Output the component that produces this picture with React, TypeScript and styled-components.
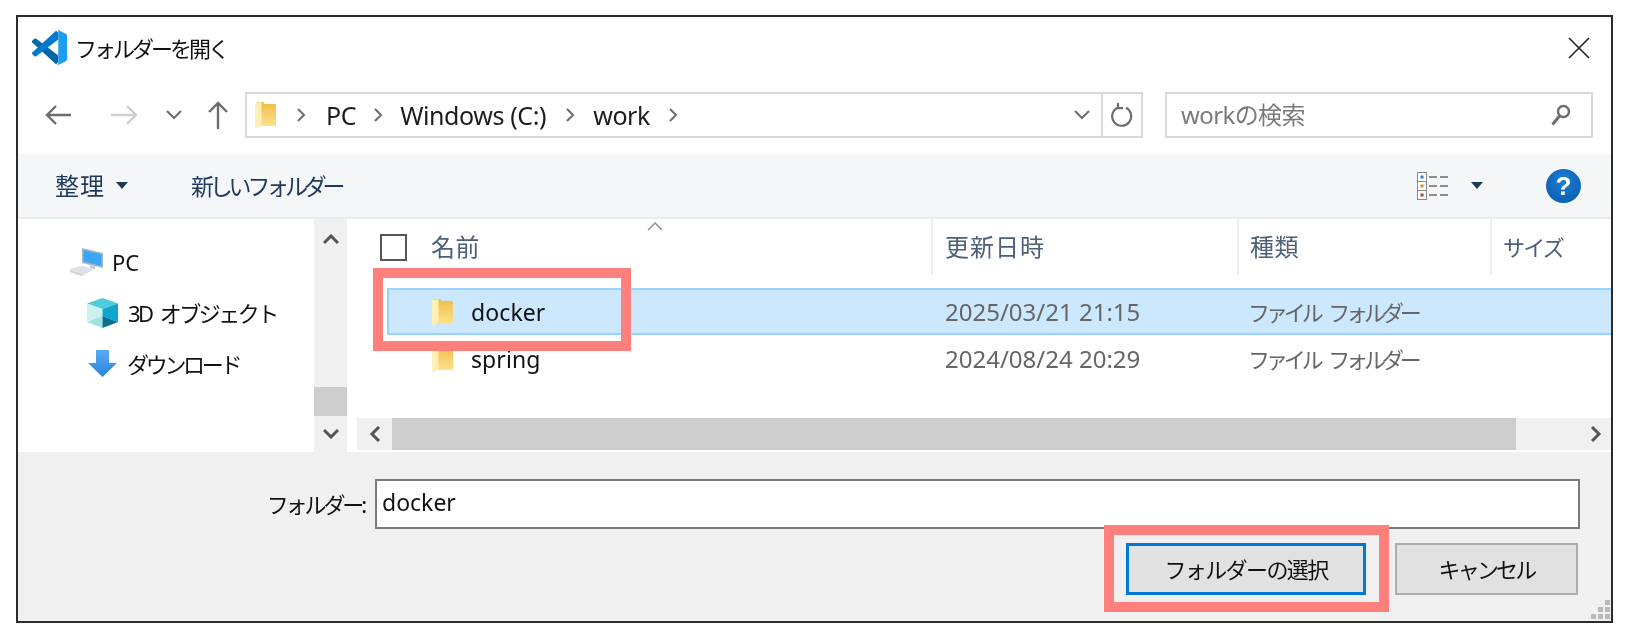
import React from "react";
import styled, { createGlobalStyle } from "styled-components";

const Global = createGlobalStyle`
  html, body { margin: 0; padding: 0; background: #fff; }
  body { font-family: "Noto Sans", "Open Sans", "Noto Sans CJK JP", sans-serif; }
`;

const Page = styled.div`
  width: 1628px;
  height: 634px;
  padding: 15px 0 0 16px;
  box-sizing: border-box;
  background: #fff;
`;

const Dialog = styled.div`
  position: relative;
  width: 1597px;
  height: 608px;
  box-sizing: border-box;
  border: 2px solid #2b2b2b;
  background: #fff;
  display: flex;
  flex-direction: column;
  overflow: hidden;
  filter: blur(0.45px);
`;

const Jp = `"Noto Sans", "Noto Sans CJK JP", sans-serif`;

const TitleBar = styled.div`
  height: 65px;
  flex: none;
  display: flex;
  align-items: center;
  padding: 0 21px 4px 14px;
  box-sizing: border-box;
`;

const TitleText = styled.div`
  margin-left: 8px;
  font: 22px/30px ${Jp};
  letter-spacing: -3px;
  color: #111;
  flex: 1;
`;

const NavBar = styled.div`
  height: 72px;
  flex: none;
  display: flex;
  padding: 10px 18px 0 26px;
  box-sizing: border-box;
`;

const NavButtons = styled.div`
  width: 201px;
  height: 46px;
  display: flex;
  align-items: center;
  flex: none;
`;

const NavSlot = styled.span<{ $ml: number }>`
  display: inline-flex;
  margin-left: ${(p) => p.$ml}px;
  flex: none;
`;

const AddressBox = styled.div`
  width: 898px;
  height: 46px;
  box-sizing: border-box;
  border: 2px solid #d9d9d9;
  display: flex;
  align-items: center;
  padding-left: 8px;
  flex: none;
`;

const Crumb = styled.span`
  font: 25px/30px ${Jp};
  letter-spacing: -0.4px;
  color: #1c1c1c;
  white-space: nowrap;
`;

const Fill = styled.div`
  flex: 1;
`;

const AddressEnd = styled.div`
  width: 40px;
  height: 100%;
  box-sizing: border-box;
  border-left: 2px solid #d9d9d9;
  margin-left: 11px;
  display: flex;
  align-items: center;
  justify-content: center;
  flex: none;
`;

const SearchBox = styled.div`
  margin-left: 22px;
  flex: 1;
  height: 46px;
  box-sizing: border-box;
  border: 2px solid #d9d9d9;
  display: flex;
  align-items: center;
  padding: 0 20px 0 14px;
`;

const SearchText = styled.span`
  flex: 1;
  font: 24px/30px ${Jp};
  letter-spacing: -0.6px;
  color: #7a7a7a;
`;

const Toolbar = styled.div`
  height: 65px;
  flex: none;
  box-sizing: border-box;
  background: #f5f6f7;
  border-bottom: 2px solid #ececec;
  display: flex;
  align-items: center;
  padding: 0 30px 0 37px;
`;

const ToolText = styled.span<{ $ls: number; $size: number; $ml?: number }>`
  font: ${(p) => p.$size}px/30px ${Jp};
  letter-spacing: ${(p) => p.$ls}px;
  margin-left: ${(p) => p.$ml ?? 0}px;
  color: #1e395b;
  white-space: nowrap;
`;

const Caret = styled.span<{ $gap: number }>`
  width: 0;
  height: 0;
  border-left: 6.5px solid transparent;
  border-right: 6.5px solid transparent;
  border-top: 7px solid #1e395b;
  margin-left: ${(p) => p.$gap}px;
  flex: none;
`;

const HelpBadge = styled.div`
  width: 35px;
  height: 34px;
  border-radius: 50%;
  background: radial-gradient(circle at 50% 35%, #1a7ed4, #0a57ab);
  color: #fff;
  font: bold 26px/34px "Liberation Sans", sans-serif;
  text-align: center;
  margin-left: 63px;
  flex: none;
`;

const Content = styled.div`
  height: 233px;
  flex: none;
  display: flex;
  background: #fff;
`;

const NavPane = styled.div`
  width: 296px;
  flex: none;
  padding-top: 17px;
  box-sizing: border-box;
`;

const NavItem = styled.div<{ $indent: number; $gap: number }>`
  height: 51px;
  display: flex;
  align-items: center;
  padding-left: ${(p) => p.$indent}px;
  gap: ${(p) => p.$gap}px;
`;

const NavLabel = styled.span<{ $ls: number; $ws?: number }>`
  font: 22px/30px ${Jp};
  letter-spacing: ${(p) => p.$ls}px;
  word-spacing: ${(p) => p.$ws ?? 0}px;
  color: #111;
  white-space: nowrap;
`;

const VScroll = styled.div`
  width: 33px;
  flex: none;
  background: #f0f0f0;
  display: flex;
  flex-direction: column;
`;

const VScrollButton = styled.div<{ $h: number }>`
  height: ${(p) => p.$h}px;
  display: flex;
  align-items: center;
  justify-content: center;
  flex: none;
`;

const VThumb = styled.div`
  height: 29px;
  background: #cdcdcd;
  flex: none;
`;

const Main = styled.div`
  flex: 1;
  margin-left: 10px;
  display: flex;
  flex-direction: column;
  min-width: 0;
  position: relative;
`;

const HeaderRow = styled.div`
  height: 56px;
  flex: none;
  display: grid;
  grid-template-columns: 574px 306px 253px 1fr;
  margin-bottom: 13px;
`;

const HeaderCell = styled.div<{ $ls: number; $pad: number; $divider?: boolean }>`
  display: flex;
  align-items: center;
  height: 100%;
  box-sizing: border-box;
  padding-left: ${(p) => p.$pad}px;
  border-left: ${(p) => (p.$divider ? "2px solid #eceef1" : "none")};
  font: 24px/30px ${Jp};
  color: #4d6078;
  letter-spacing: ${(p) => p.$ls}px;
`;

const KanaHeader = styled(HeaderCell)`
  font-size: 22px;
`;

const CheckBox = styled.span`
  width: 27px;
  height: 27px;
  box-sizing: border-box;
  border: 2px solid #555;
  margin-right: 24px;
  flex: none;
`;

const SortCaret = styled.svg`
  position: absolute;
  left: 290px;
  top: 3px;
`;

const FileRow = styled.div<{ $selected?: boolean }>`
  height: 47px;
  flex: none;
  box-sizing: border-box;
  margin-left: 30px;
  display: grid;
  grid-template-columns: 545px 305px 1fr;
  align-items: center;
  background: ${(p) => (p.$selected ? "#cce8ff" : "transparent")};
  border: 2px solid ${(p) => (p.$selected ? "#99d1ff" : "transparent")};
  border-right: none;
`;

const NameCell = styled.div`
  display: flex;
  align-items: center;
  gap: 18px;
  padding-left: 43px;
  font: 23px/30px ${Jp};
  letter-spacing: 0.1px;
  color: #111;
`;

const MetaCell = styled.div<{ $narrow?: boolean }>`
  padding-left: ${(p) => (p.$narrow ? 9 : 11)}px;
  font: ${(p) => (p.$narrow ? 22 : 24)}px/30px ${Jp};
  letter-spacing: ${(p) => (p.$narrow ? "-4.1px" : "0")};
  word-spacing: ${(p) => (p.$narrow ? "7px" : "0")};
  color: #666;
  white-space: nowrap;
`;

const HScroll = styled.div`
  margin-top: auto;
  margin-bottom: 2px;
  height: 32px;
  flex: none;
  display: flex;
  background: #f0f0f0;
`;

const HScrollButton = styled.div<{ $w: number; $end?: boolean }>`
  width: ${(p) => p.$w}px;
  flex: none;
  display: flex;
  align-items: center;
  justify-content: ${(p) => (p.$end ? "flex-end" : "center")};
  padding-right: ${(p) => (p.$end ? 9 : 0)}px;
  box-sizing: border-box;
`;

const HThumb = styled.div`
  flex: 1;
  background: #cdcdcd;
`;

const Footer = styled.div`
  flex: 1;
  position: relative;
  background: #f0f0f0;
  padding: 27px 31px 0 0;
  box-sizing: border-box;
  display: flex;
  flex-direction: column;
`;

const FieldRow = styled.div`
  display: flex;
  justify-content: flex-end;
  align-items: center;
  gap: 11px;
`;

const FieldLabel = styled.span`
  font: 22px/30px ${Jp};
  letter-spacing: -3.1px;
  color: #111;
  white-space: nowrap;
`;

const Field = styled.div`
  width: 1205px;
  height: 50px;
  box-sizing: border-box;
  border: 2px solid #7a7a7a;
  background: #fff;
  padding: 0 5px 5px;
  display: flex;
  align-items: center;
  font: 23px/30px ${Jp};
  color: #111;
`;

const ButtonRow = styled.div`
  margin-top: 14px;
  padding-right: 2px;
  display: flex;
  justify-content: flex-end;
  gap: 29px;
`;

const DialogButton = styled.div<{ $primary?: boolean; $w: number; $ls: number }>`
  width: ${(p) => p.$w}px;
  height: 52px;
  box-sizing: border-box;
  background: #e1e1e1;
  border: ${(p) => (p.$primary ? "3px solid #0078d7" : "2px solid #adadad")};
  display: flex;
  align-items: center;
  justify-content: center;
  font: 22px/30px ${Jp};
  letter-spacing: ${(p) => p.$ls}px;
  color: #111;
`;

const Grip = styled.div`
  position: absolute;
  right: 1px;
  bottom: 2px;
  display: flex;
`;

const Callout = styled.div<{ $l: number; $t: number; $w: number; $h: number }>`
  position: absolute;
  left: ${(p) => p.$l}px;
  top: ${(p) => p.$t}px;
  width: ${(p) => p.$w}px;
  height: ${(p) => p.$h}px;
  box-sizing: border-box;
  border: 10px solid #ff7f7c;
`;

const Spaced = styled.span<{ $w: number }>`
  display: inline-flex;
  justify-content: center;
  width: ${(p) => p.$w}px;
  flex: none;
`;

const VSCodeLogo = () => (
  <svg width="35" height="35" viewBox="0 0 24 24">
    <path fill="#0065a9" d="M.327 7.261 1.65 6.06a1 1 0 0 1 1.276-.057L18 17.45v4.5l-1.5 1.55L.326 8.74a1 1 0 0 1 0-1.479z" />
    <path fill="#007acc" d="M.326 15.26 16.5.5 18 1.9v4.65L2.926 17.997a1 1 0 0 1-1.276-.057L.327 16.739a1 1 0 0 1 0-1.479z" />
    <path fill="#1f9cf0" d="M16.505.5a1.494 1.494 0 0 1 1.705-.29l4.94 2.377A1.5 1.5 0 0 1 24 3.939V20.06a1.5 1.5 0 0 1-.85 1.352l-4.942 2.377a1.492 1.492 0 0 1-1.704-.29c.6.6 1.5.2 1.5-.6V1.1c0-.8-.9-1.2-1.5-.6z" />
  </svg>
);

const Folder = () => (
  <svg width="21" height="28" viewBox="0 0 21 28">
    <defs>
      <linearGradient id="fg" x1="0" y1="0" x2="0" y2="1">
        <stop offset="0" stopColor="#f0bd45" />
        <stop offset="1" stopColor="#fde08c" />
      </linearGradient>
    </defs>
    <path fill="url(#fg)" d="M2 1h6l2 2h11v22H2z" />
    <path fill="#fff0b8" d="M0 2.5 6.5 1v23L1.5 27.5 0 26.5z" />
  </svg>
);

const ArrowLeft = ({ c }: { c: string }) => (
  <svg width="28" height="22" viewBox="0 0 28 22" fill="none" stroke={c} strokeWidth="2.4">
    <path d="M27 11H3M12 2l-9 9 9 9" />
  </svg>
);

const ArrowRight = ({ c }: { c: string }) => (
  <svg width="28" height="22" viewBox="0 0 28 22" fill="none" stroke={c} strokeWidth="2.4">
    <path d="M1 11h25M17 2l9 9-9 9" />
  </svg>
);

const ArrowUp = () => (
  <svg width="20" height="28" viewBox="0 0 20 28" fill="none" stroke="#6d6d6d" strokeWidth="2.4">
    <path d="M10 28V2M1 11l9-9 9 9" />
  </svg>
);

const ChevDown = ({ c = "#6d6d6d", sw = 2 }: { c?: string; sw?: number }) => (
  <svg width="16" height="10" viewBox="0 0 16 10" fill="none" stroke={c} strokeWidth={sw}>
    <path d="M1 1l7 7 7-7" />
  </svg>
);

const ChevUpSmall = ({ c = "#555", sw = 3 }: { c?: string; sw?: number }) => (
  <svg width="16" height="10" viewBox="0 0 16 10" fill="none" stroke={c} strokeWidth={sw}>
    <path d="M1 9l7-7 7 7" />
  </svg>
);

const ChevRight = ({ c = "#6d6d6d", sw = 2 }: { c?: string; sw?: number }) => (
  <svg width="10" height="14" viewBox="0 0 10 14" fill="none" stroke={c} strokeWidth={sw}>
    <path d="M2 1l6 6-6 6" />
  </svg>
);

const ChevLeftBold = () => (
  <svg width="12" height="16" viewBox="0 0 12 16" fill="none" stroke="#555" strokeWidth="3">
    <path d="M10 1L3 8l7 7" />
  </svg>
);

const ChevRightBold = () => (
  <svg width="12" height="16" viewBox="0 0 12 16" fill="none" stroke="#555" strokeWidth="3">
    <path d="M2 1l7 7-7 7" />
  </svg>
);

const Refresh = () => (
  <svg width="22" height="26" viewBox="0 0 22 26" fill="none" stroke="#6d6d6d" strokeWidth="2.2">
    <path d="M7 5.5a9.5 9.5 0 1 0 8 .3M7 1v5.2h5" />
  </svg>
);

const Magnifier = () => (
  <svg width="20" height="22" viewBox="0 0 20 22" fill="none" stroke="#6d6d6d">
    <circle cx="12.5" cy="7.5" r="5.5" strokeWidth="2.4" />
    <path d="M8.5 12 1.5 20.5" strokeWidth="3" />
  </svg>
);

const CloseX = () => (
  <svg width="22" height="22" viewBox="0 0 22 22" fill="none" stroke="#222" strokeWidth="1.6">
    <path d="M1 1l20 20M21 1L1 21" />
  </svg>
);

const ViewIcon = () => (
  <svg width="32" height="28" viewBox="0 0 32 28">
    <rect x="0.5" y="0.5" width="9" height="9" fill="#fff" stroke="#8a8a8a" />
    <rect x="0.5" y="9.5" width="9" height="9" fill="#fff" stroke="#8a8a8a" />
    <rect x="0.5" y="18.5" width="9" height="9" fill="#fff" stroke="#8a8a8a" />
    <rect x="3.5" y="3.5" width="3" height="3" fill="#2a7fc0" />
    <rect x="3.5" y="12.5" width="3" height="3" fill="#b89a1c" />
    <rect x="3.5" y="21.5" width="3" height="3" fill="#c0392b" />
    <path d="M12 5h8M23 5h8M12 14h8M23 14h8M12 23h8M23 23h8" stroke="#6a6a6a" strokeWidth="1.6" />
  </svg>
);

const PcIcon = () => (
  <svg width="34" height="28" viewBox="0 0 34 28">
    <path fill="#a9b6c2" d="M13 0l21 5v15l-21-5z" />
    <path fill="#38a8f5" d="M14.5 2l18 4.3v11.6l-18-4.3z" />
    <path fill="#c3ccd4" d="M21 17l5 1.2v3L21 20z" />
    <path fill="#dfe3e7" d="M1 21l12-3.5 12 4L13 28 1 24z" />
    <path fill="#c9ced3" d="M1 24l12 4v-1.5L1 22.5z" />
  </svg>
);

const CubeIcon = () => (
  <svg width="31" height="30" viewBox="0 0 31 30">
    <path fill="#4fcbe0" d="M15.5 0 31 5.5 15.5 11 0 5.5z" />
    <path fill="#cdf1f0" d="M0 5.5 15.5 11v7L0 24z" />
    <path fill="#9fe2e2" d="M0 24l15.5-6v12z" />
    <path fill="#0ea5cf" d="M31 5.5 15.5 11v7L31 24z" />
    <path fill="#0b6f8e" d="M31 24l-15.5-6v12z" />
  </svg>
);

const DownArrow = () => (
  <svg width="29" height="27" viewBox="0 0 29 27">
    <defs>
      <linearGradient id="da" x1="0" y1="0" x2="0" y2="1">
        <stop offset="0" stopColor="#5aa9ee" />
        <stop offset="1" stopColor="#2a84dc" />
      </linearGradient>
    </defs>
    <path fill="url(#da)" d="M8 0h13v13h8L14.5 27 0 13h8z" />
  </svg>
);

const GripDots = () => (
  <svg width="19" height="19" viewBox="0 0 19 19" fill="#b9b9b9">
    <rect x="14" y="0" width="5" height="5" />
    <rect x="7" y="7" width="5" height="5" />
    <rect x="14" y="7" width="5" height="5" />
    <rect x="0" y="14" width="5" height="5" />
    <rect x="7" y="14" width="5" height="5" />
    <rect x="14" y="14" width="5" height="5" />
  </svg>
);

export default function App() {
  return (
    <>
      <Global />
      <Page>
        <Dialog>
          <TitleBar>
            <VSCodeLogo />
            <TitleText>フォルダーを開く</TitleText>
            <CloseX />
          </TitleBar>
          <NavBar>
            <NavButtons>
              <NavSlot $ml={0}>
                <ArrowLeft c="#6d6d6d" />
              </NavSlot>
              <NavSlot $ml={38}>
                <ArrowRight c="#cfcfcf" />
              </NavSlot>
              <NavSlot $ml={28}>
                <ChevDown />
              </NavSlot>
              <NavSlot $ml={26}>
                <ArrowUp />
              </NavSlot>
            </NavButtons>
            <AddressBox>
              <Folder />
              <Spaced $w={50}>
                <ChevRight />
              </Spaced>
              <Crumb>PC</Crumb>
              <Spaced $w={44}>
                <ChevRight />
              </Spaced>
              <Crumb>Windows (C:)</Crumb>
              <Spaced $w={47}>
                <ChevRight />
              </Spaced>
              <Crumb>work</Crumb>
              <Spaced $w={46}>
                <ChevRight />
              </Spaced>
              <Fill />
              <ChevDown />
              <AddressEnd>
                <Refresh />
              </AddressEnd>
            </AddressBox>
            <SearchBox>
              <SearchText>workの検索</SearchText>
              <Magnifier />
            </SearchBox>
          </NavBar>
          <Toolbar>
            <ToolText $size={24} $ls={1}>整理</ToolText>
            <Caret $gap={11} />
            <ToolText $size={23} $ls={-4.2} $ml={63}>新しいフォルダー</ToolText>
            <Fill />
            <ViewIcon />
            <Caret $gap={22} />
            <HelpBadge>?</HelpBadge>
          </Toolbar>
          <Content>
            <NavPane>
              <NavItem $indent={51} $gap={9}>
                <PcIcon />
                <NavLabel $ls={0}>PC</NavLabel>
              </NavItem>
              <NavItem $indent={69} $gap={10}>
                <CubeIcon />
                <NavLabel $ls={-2.5} $ws={5}>3D オブジェクト</NavLabel>
              </NavItem>
              <NavItem $indent={70} $gap={10}>
                <DownArrow />
                <NavLabel $ls={-3.3}>ダウンロード</NavLabel>
              </NavItem>
            </NavPane>
            <VScroll>
              <VScrollButton $h={40}>
                <ChevUpSmall />
              </VScrollButton>
              <Fill />
              <VThumb />
              <VScrollButton $h={36}>
                <ChevDown c="#555" sw={3} />
              </VScrollButton>
            </VScroll>
            <Main>
              <HeaderRow>
                <HeaderCell $ls={0.5} $pad={23}>
                  <CheckBox />
                  名前
                </HeaderCell>
                <HeaderCell $divider $ls={1} $pad={12}>更新日時</HeaderCell>
                <HeaderCell $divider $ls={0.5} $pad={11}>種類</HeaderCell>
                <KanaHeader $divider $ls={-1.8} $pad={11}>サイズ</KanaHeader>
              </HeaderRow>
              <SortCaret width="16" height="9" viewBox="0 0 16 9" fill="none" stroke="#8a8a8a" strokeWidth="1.4">
                <path d="M1 8l7-7 7 7" />
              </SortCaret>
              <FileRow $selected>
                <NameCell>
                  <Folder />
                  docker
                </NameCell>
                <MetaCell>2025/03/21 21:15</MetaCell>
                <MetaCell $narrow>ファイル フォルダー</MetaCell>
              </FileRow>
              <FileRow>
                <NameCell>
                  <Folder />
                  spring
                </NameCell>
                <MetaCell>2024/08/24 20:29</MetaCell>
                <MetaCell $narrow>ファイル フォルダー</MetaCell>
              </FileRow>
              <HScroll>
                <HScrollButton $w={35}>
                  <ChevLeftBold />
                </HScrollButton>
                <HThumb />
                <HScrollButton $w={95} $end>
                  <ChevRightBold />
                </HScrollButton>
              </HScroll>
            </Main>
          </Content>
          <Footer>
            <FieldRow>
              <FieldLabel>フォルダー:</FieldLabel>
              <Field>docker</Field>
            </FieldRow>
            <ButtonRow>
              <DialogButton $primary $w={240} $ls={-1.6}>
                フォルダーの選択
              </DialogButton>
              <DialogButton $w={183} $ls={-2.8}>キャンセル</DialogButton>
            </ButtonRow>
            <Grip>
              <GripDots />
            </Grip>
          </Footer>
          <Callout $l={355} $t={251} $w={258} $h={83} />
          <Callout $l={1086} $t={508} $w={285} $h={87} />
        </Dialog>
      </Page>
    </>
  );
}
